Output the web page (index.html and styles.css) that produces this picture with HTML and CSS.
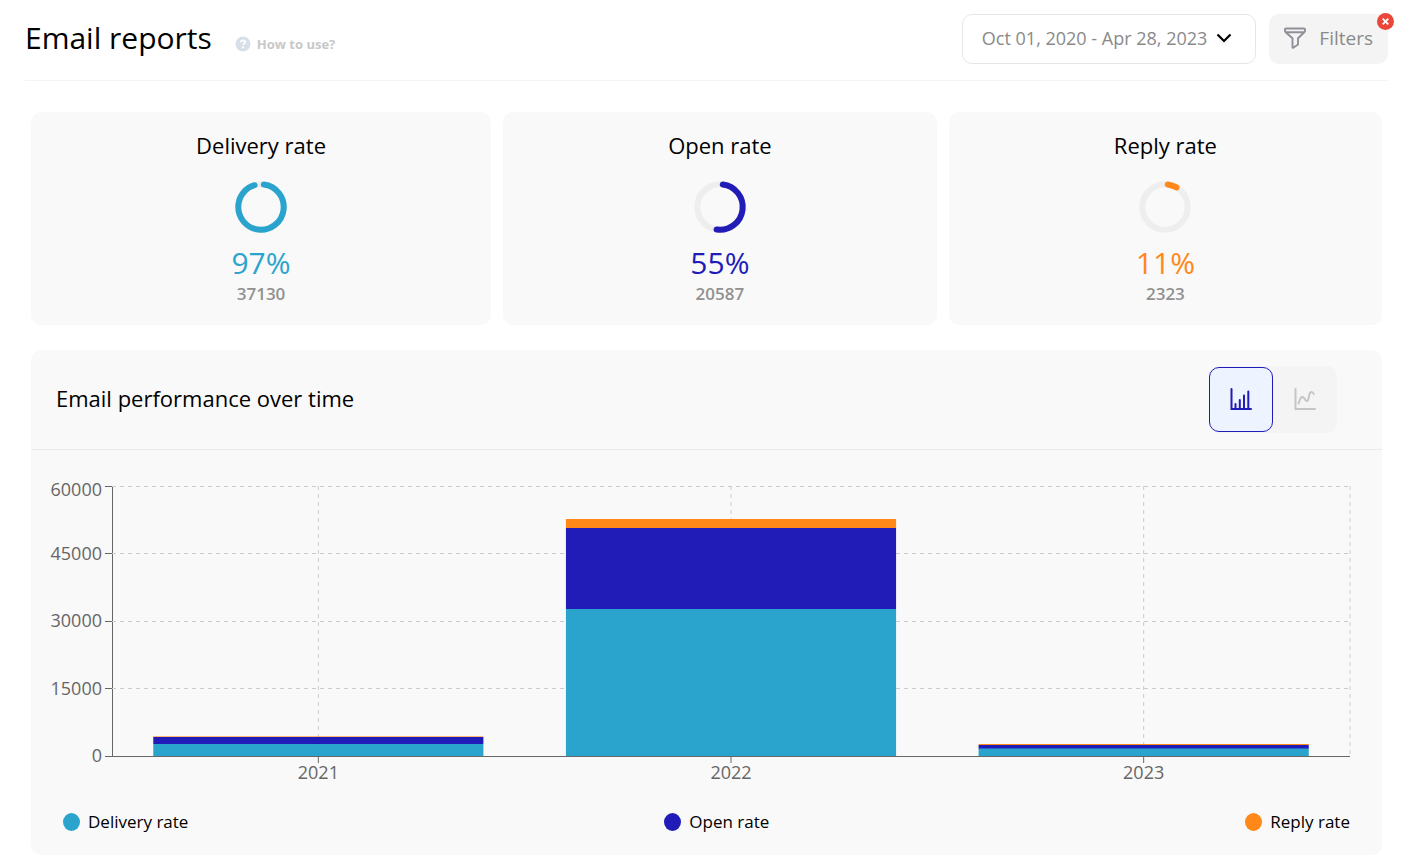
FILE: index.html
```html
<!DOCTYPE html>
<html lang="en">
<head>
<meta charset="utf-8">
<meta name="viewport" content="width=device-width, initial-scale=1">
<title>Email reports</title>
<link rel="stylesheet" href="styles.css">
</head>
<body>
<header class="page-header">
  <div class="heading">
    <h1 class="title">Email reports</h1>
    <a class="help" href="#help">
      <svg class="help-icon" viewBox="0 0 16 16" aria-hidden="true"><circle cx="8" cy="8" r="7.5" fill="#d9dfe9"/><path d="M5.9 6.3C6 4.9 7 4.3 8.1 4.3c1.200 0 2.100.7 2.100 1.800 0 1.500-2 1.500-2 2.900" fill="none" stroke="#fff" stroke-width="1.700"/><circle cx="8.100" cy="11.300" r="1.100" fill="#fff"/></svg>
      <span>How to use?</span>
    </a>
  </div>
  <div class="actions">
    <button class="date-range" type="button">
      <span>Oct 01, 2020 - Apr 28, 2023</span>
      <svg class="chevron" viewBox="0 0 16 16" aria-hidden="true"><path d="M1.500 4.500 8 11l6.500-6.500" fill="none" stroke="#000" stroke-width="2.200"/></svg>
    </button>
    <div class="filters-wrap">
      <button class="filters" type="button">
        <svg class="funnel" viewBox="0 0 22 22" aria-hidden="true"><path d="M2 1.500h18q1 0 1 1v1.300q0 .8-.7 1.400L14 11.300v6.200l-4.700 3.300q-.8.200-.8-.6v-8.900L1.700 5.200Q1 4.600 1 3.800V2.500q0-1 1-1zM1.800 5.300h18.400" fill="none" stroke="#8f9097" stroke-width="1.900" stroke-linejoin="round"/></svg>
        <span>Filters</span>
      </button>
      <button class="clear" type="button" aria-label="Clear filters">
        <svg class="clear-icon" viewBox="0 0 17 17" aria-hidden="true"><path d="m5.700 5.700 5.600 5.600m0-5.600-5.600 5.600" stroke="#fff" stroke-width="1.800"/></svg>
      </button>
    </div>
  </div>
</header>

<main class="content">
  <section class="cards">
    <article class="card delivery">
      <h2 class="card-title">Delivery rate</h2>
      <svg class="ring" viewBox="0 0 54 54" aria-hidden="true"><circle class="track" cx="27" cy="27" r="22.700"/><circle class="arc" cx="27" cy="27" r="22.700" pathLength="100" stroke-dasharray="93.500 100" transform="rotate(-83 27 27)"/></svg>
      <strong class="rate">97%</strong>
      <span class="count">37130</span>
    </article>
    <article class="card open">
      <h2 class="card-title">Open rate</h2>
      <svg class="ring" viewBox="0 0 54 54" aria-hidden="true"><circle class="track" cx="27" cy="27" r="22.700"/><circle class="arc" cx="27" cy="27" r="22.700" pathLength="100" stroke-dasharray="50.500 100" transform="rotate(-83 27 27)"/></svg>
      <strong class="rate">55%</strong>
      <span class="count">20587</span>
    </article>
    <article class="card reply">
      <h2 class="card-title">Reply rate</h2>
      <svg class="ring" viewBox="0 0 54 54" aria-hidden="true"><circle class="track" cx="27" cy="27" r="22.700"/><circle class="arc" cx="27" cy="27" r="22.700" pathLength="100" stroke-dasharray="6.500 100" transform="rotate(-83 27 27)"/></svg>
      <strong class="rate">11%</strong>
      <span class="count">2323</span>
    </article>
  </section>

  <section class="panel">
    <div class="panel-header">
      <h2 class="panel-title">Email performance over time</h2>
      <div class="toggle" role="group" aria-label="Chart type">
        <button class="toggle-button active" type="button" aria-pressed="true" aria-label="Bar chart">
          <svg class="toggle-icon" viewBox="0 0 22 22" fill="none" stroke="#211cb8" stroke-width="2" stroke-linecap="round" aria-hidden="true"><path d="M1.500 1v20H21M5.500 16v4M9.800 12v8M14 7.500V20M18.300 3.500V20"/></svg>
        </button>
        <button class="toggle-button" type="button" aria-pressed="false" aria-label="Line chart">
          <svg class="toggle-icon" viewBox="0 0 22 22" fill="none" stroke="#c5c5c5" stroke-width="2" stroke-linecap="round" aria-hidden="true"><path d="M1.500 1v20H21M4.500 15.500 6.300 11c1-2.400 2.600-2.600 4-.700l1.500 2c1 1.300 2 .7 2.400-.8L15.500 6c.6-2.500 3-3 4.200 0"/></svg>
        </button>
      </div>
    </div>

    <div class="chart" role="img" aria-label="Emails per year by rate">
      <svg class="y-axis" shape-rendering="crispEdges">
        <g class="tick-text" text-anchor="end"><text x="71" y="16">60000</text><text x="71" y="80">45000</text><text x="71" y="147">30000</text><text x="71" y="215">15000</text><text x="71" y="282">0</text></g>
        <path class="axis" d="M74 6.500h8M74 73.500h7M74 141.500h7M74 208.500h7M74 276.500h7M81.500 6v271"/>
      </svg>
      <svg class="plot">
        <g class="grid"><line x1="0" x2="100%" y1="6.500" y2="6.500"/><line x1="0" x2="100%" y1="73.500" y2="73.500"/><line x1="0" x2="100%" y1="141.500" y2="141.500"/><line x1="0" x2="100%" y1="208.500" y2="208.500"/><line x1="16.667%" x2="16.667%" y1="6" y2="276"/><line x1="50%" x2="50%" y1="6" y2="276"/><line x1="83.333%" x2="83.333%" y1="6" y2="276"/><line x1="100%" x2="100%" y1="6" y2="276"/></g>
        <g fill="#ff8819"><rect x="3.333%" y="256" width="26.667%" height="1" opacity=".6"/><rect x="36.667%" y="39" width="26.667%" height="9"/><rect x="70%" y="264" width="26.667%" height="1"/></g>
        <g fill="#211cb8"><rect x="3.333%" y="257" width="26.667%" height="7"/><rect x="36.667%" y="48" width="26.667%" height="81"/><rect x="70%" y="265" width="26.667%" height="4"/></g>
        <g fill="#2ba4cd"><rect x="3.333%" y="264" width="26.667%" height="12"/><rect x="36.667%" y="129" width="26.667%" height="147"/><rect x="70%" y="268.500" width="26.667%" height="8"/></g>
        <g class="axis"><line x1="0" x2="100%" y1="276.500" y2="276.500"/><line x1="16.667%" x2="16.667%" y1="276" y2="283"/><line x1="50%" x2="50%" y1="276" y2="283"/><line x1="83.333%" x2="83.333%" y1="276" y2="283"/></g>
        <g class="tick-text" text-anchor="middle"><text x="16.667%" y="299">2021</text><text x="50%" y="299">2022</text><text x="83.333%" y="299">2023</text></g>
      </svg>
    </div>
    <ul class="legend">
      <li class="legend-item delivery">Delivery rate</li>
      <li class="legend-item open">Open rate</li>
      <li class="legend-item reply">Reply rate</li>
    </ul>
  </section>
</main>
</body>
</html>
```
FILE: styles.css
```css
* {
  box-sizing: border-box;
}

body {
  margin: 0;
  padding: 0 19px 0 25px;
  background: #fff;
  color: #000;
  font-family: "Open Sans", "Noto Sans", sans-serif;
}

button {
  margin: 0;
  padding: 0;
  border: 0;
  font: inherit;
  color: inherit;
  cursor: pointer;
}

h1,
h2 {
  margin: 0;
  font-weight: 400;
}

svg {
  display: block;
}

.delivery { --tone: #2ba4cd; }
.open { --tone: #211cb8; }
.reply { --tone: #ff8819; }

.page-header {
  display: flex;
  justify-content: space-between;
  padding: 14px 0 16px;
  border-bottom: 1px solid #f3f3f3;
}

.heading {
  display: flex;
  align-items: center;
  gap: 23px;
}

.title {
  padding-bottom: 2px;
  font-size: 30px;
  line-height: 48px;
}

.help {
  display: flex;
  align-items: center;
  gap: 6px;
  padding-top: 10px;
  color: #c8c8c8;
  font-size: 13px;
  font-weight: 700;
  line-height: 18px;
  text-decoration: none;
}

.help-icon {
  width: 16px;
  height: 16px;
}

.actions {
  display: flex;
  gap: 13px;
}

.date-range {
  display: flex;
  align-items: center;
  gap: 9px;
  height: 50px;
  padding: 0 23px 2px 19px;
  border: 1px solid #e6e6e6;
  border-radius: 10px;
  background: #fff;
  color: #8a8a8a;
  font-size: 18px;
}

.chevron {
  width: 16px;
  height: 16px;
}

.filters-wrap {
  position: relative;
}

.filters {
  display: flex;
  align-items: center;
  gap: 13px;
  height: 50px;
  padding: 0 15px 2px;
  border-radius: 10px;
  background: #f4f4f4;
  color: #8a8a8a;
  font-size: 19px;
}

.funnel {
  width: 22px;
  height: 22px;
}

.clear {
  position: absolute;
  top: -1px;
  right: -6px;
  border-radius: 50%;
  background: #ea4639;
}

.clear-icon {
  width: 17px;
  height: 17px;
}

.content {
  padding: 31px 6px 4px;
}

.cards {
  display: flex;
  gap: 12px;
}

.card {
  display: flex;
  flex: 1 1 auto;
  flex-direction: column;
  align-items: center;
  padding: 19px 0 20px;
  border-radius: 10px;
  background: #f9f9f9;
}

.card-title,
.panel-title {
  font-size: 22px;
  line-height: 28px;
}

.ring {
  width: 54px;
  height: 54px;
  margin: 21px 0 10px;
  fill: none;
  stroke-width: 6px;
}

.track {
  stroke: #eee;
}

.arc {
  stroke: var(--tone);
  stroke-linecap: round;
}

.rate {
  color: var(--tone);
  font-size: 30px;
  font-weight: 500;
  line-height: 38px;
}

.count {
  color: #919191;
  font-size: 17px;
  font-weight: 600;
  line-height: 23px;
}

.panel {
  margin-top: 25px;
  padding-bottom: 21px;
  border-radius: 10px;
  background: #f9f9f9;
}

.panel-header {
  display: flex;
  align-items: center;
  justify-content: space-between;
  padding: 16px 45px 16px 25px;
  border-bottom: 1px solid #ebebeb;
}

.panel-title {
  padding-bottom: 4px;
}

.toggle {
  display: flex;
  padding: 1px 0;
  border-radius: 10px;
  background: #f4f4f4;
}

.toggle-button {
  display: grid;
  place-items: center;
  width: 64px;
  height: 65px;
  padding-bottom: 2px;
  border-radius: 10px;
  background: none;
}

.toggle-button.active {
  border: 1px solid #211cb8;
  background: #edf3ff;
}

.toggle-icon {
  width: 22px;
  height: 22px;
}

.chart {
  display: grid;
  grid-template-columns: 81px 1fr;
  margin: 30px 32px 0 0;
}

.y-axis,
.plot {
  width: 100%;
  height: 306px;
  overflow: visible;
}

.grid {
  stroke: #ccc;
  stroke-dasharray: 4 4;
}

.axis {
  fill: none;
  stroke: #666;
}

.tick-text {
  fill: #666;
  font-size: 18px;
}

.legend {
  display: flex;
  justify-content: space-between;
  margin: 0;
  padding: 24px 32px 0;
  list-style: none;
  font-size: 17px;
  line-height: 24px;
}

.legend-item {
  display: flex;
  align-items: center;
  gap: 8px;
}

.legend-item::before {
  width: 17px;
  height: 18px;
  border-radius: 50%;
  background: var(--tone);
  content: "";
}
```
